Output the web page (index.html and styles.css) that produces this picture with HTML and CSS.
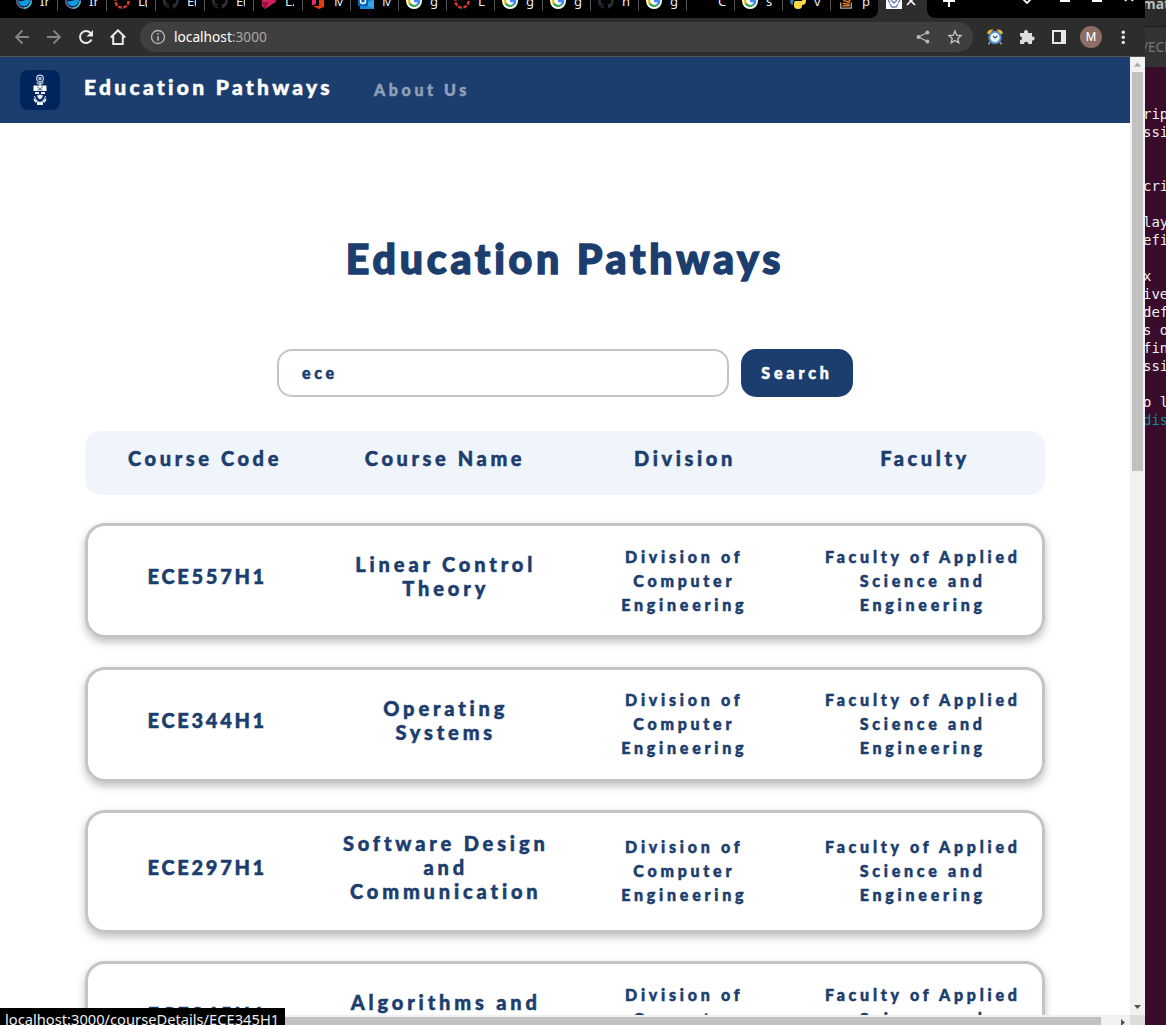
FILE: index.html
```html
<!DOCTYPE html>
<html lang="en">
<head>
<meta charset="utf-8">
<title>Education Pathways</title>
<link rel="stylesheet" href="styles.css">
</head>
<body>
<svg class="defs" width="0" height="0">
  <symbol id="swirl" viewBox="0 0 16 16"><circle cx="8" cy="8" r="7.2" fill="#111b2c" stroke="#7a6bb0" stroke-width="1.4"/><path d="M8 15.2A7.2 7.2 0 0 0 15.2 8" fill="none" stroke="#3cc8d8" stroke-width="1.4"/><path d="M2 7.500Q5 9 8 7.500Q11 6 14 7Q13 13 8 13.200Q3 13 2 7.500Z" fill="#0d9be0"/></symbol>
  <symbol id="ring" viewBox="0 0 16 16"><circle cx="8" cy="8" r="6.600" fill="none" stroke="#e03a2f" stroke-width="2.400" stroke-dasharray="3.700 1.480"/></symbol>
  <symbol id="cat" viewBox="0 0 16 16"><path d="M8 0a8 8 0 0 0-2.500 15.600c.4.100.5-.2.500-.4v-1.500c-2.200.5-2.700-1-2.700-1-.4-.9-.9-1.200-.9-1.200-.7-.5.100-.5.100-.5.800.100 1.200.800 1.200.800.700 1.300 1.900.9 2.300.7.100-.5.300-.9.500-1.100C4.700 11.200 2.900 10.500 2.900 7.500c0-.9.300-1.600.8-2.100C3.600 5.100 3.300 4.300 3.800 3.200c0 0 .7-.2 2.200.8a7.600 7.600 0 0 1 4 0c1.500-1 2.200-.8 2.200-.8.400 1.100.2 1.900.1 2.100.5.600.8 1.300.8 2.200 0 3-1.900 3.700-3.600 3.900.3.300.5.700.5 1.500v2.200c0 .2.100.5.500.4A8 8 0 0 0 8 0z" fill="#2a2f36"/></symbol>
  <symbol id="google" viewBox="0 0 16 16"><circle cx="8" cy="8" r="8" fill="#fff"/><g fill="none" stroke-width="2.400"><path d="M3.800 5.500A5 5 0 0 1 11.500 4.500" stroke="#ea4335"/><path d="M3.700 5.600A5 5 0 0 0 3.700 10.500" stroke="#fbbc05"/><path d="M3.700 10.400A5 5 0 0 0 11.200 11.900" stroke="#34a853"/><path d="M11.100 11.900Q13.100 10.400 13 8H8" stroke="#4285f4"/></g></symbol>
  <symbol id="ribbon" viewBox="0 0 16 16"><path d="M1 2L16 8 4 16 1 13Z" fill="#d51e5b"/><path d="M1 9L8 9 4 16Z" fill="#8d1244"/></symbol>
  <symbol id="office" viewBox="0 0 16 16"><path d="M2 4L9 0 14 2V14L9 16 3 13H9V3L6 5V11L2 12Z" fill="#e73c12"/><path d="M2 5L6 4V11L2 12Z" fill="#e42a7e"/></symbol>
  <symbol id="mail" viewBox="0 0 16 16"><path d="M5 2H16V16H2V12Z" fill="#1487d7"/><path d="M5 11L16 7V16Z" fill="#35a5ea"/><rect y="4" width="10" height="9" fill="#0563b7"/><circle cx="5" cy="8" r="2.500" fill="none" stroke="#fff" stroke-width="1.500"/></symbol>
  <symbol id="python" viewBox="0 0 16 16"><path d="M4 3Q4 0 8 0T12 3V7H5Q3 7 3 12Q0 12 0 8T4 4Z" fill="#3b76a8"/><path d="M12 13Q12 16 8 16T4 13V10Q4 8 6 8H11Q13 8 13 4Q16 4 16 8T12 12Z" fill="#ffd648"/></symbol>
  <symbol id="stack" viewBox="0 0 16 16"><path d="M2.700 9.500V15.200H13.300V9.500" fill="none" stroke="#aaa" stroke-width="1.300"/><path d="M4.500 12.800H11.600M4.600 10.200L11.700 11.400M5.200 7.300L12 9.500M6.500 4.500L12.500 8" stroke="#ef7b25" stroke-width="1.400"/></symbol>
  <symbol id="crest" viewBox="0 0 16 32"><g fill="none" stroke="#c3cee2" stroke-width="1.200"><circle cx="8" cy="4.500" r="3.400"/><circle cx="8" cy="4.500" r="1.200"/><path d="M8 8V12M4.500 8.500L8 10.500 11.500 8.500"/><path d="M2.500 22Q3.500 27 8 28.500Q12.500 27 13.500 22"/></g><path d="M1.500 11.500H14.500V17H1.500Z" fill="#fff"/><path d="M5 12.500L8 15 11 12.500M5.500 15.800H10.500" fill="none" stroke="#51699a" stroke-width="1"/><path d="M3 18H7V20H3ZM9 18H13V20H9ZM5 21.500L8 20.500 11 21.500 10 24 8 25.500 6 24ZM1.500 24L5 27 4 29 2 27ZM14.500 24L11 27 12 29 14 27ZM5 28H11V31H5Z" fill="#e8eef8"/></symbol>
</svg>
<div class="desktop">
  <div class="browser">
    <div class="tabs">
      <div class="tab wide"><svg><use href="#swirl"/></svg><span>Ir</span></div>
      <div class="tab wide"><svg><use href="#swirl"/></svg><span>Ir</span></div>
      <div class="tab wide"><svg><use href="#ring"/></svg><span>L(</span></div>
      <div class="tab wide"><svg><use href="#cat"/></svg><span>E(</span></div>
      <div class="tab wide"><svg><use href="#cat"/></svg><span>E(</span></div>
      <div class="tab wide"><svg><use href="#ribbon"/></svg><span>L.</span></div>
      <div class="tab"><svg><use href="#office"/></svg><span>M</span></div>
      <div class="tab"><svg><use href="#mail"/></svg><span>M</span></div>
      <div class="tab"><svg><use href="#google"/></svg><span>g</span></div>
      <div class="tab"><svg><use href="#ring"/></svg><span>L</span></div>
      <div class="tab"><svg><use href="#google"/></svg><span>g</span></div>
      <div class="tab"><svg><use href="#google"/></svg><span>g</span></div>
      <div class="tab"><svg><use href="#cat"/></svg><span>n</span></div>
      <div class="tab"><svg><use href="#google"/></svg><span>g</span></div>
      <div class="tab"><svg></svg><span>C</span></div>
      <div class="tab"><svg><use href="#google"/></svg><span>s</span></div>
      <div class="tab"><svg><use href="#python"/></svg><span>v</span></div>
      <div class="tab last"><svg><use href="#stack"/></svg><span>p</span></div>
      <div class="tab-active"><svg width="49" height="18"><rect x="8" width="16" height="9" fill="#fff"/><path d="M10 0L12 3M22 0L20 3M12 4L14 7H18L20 4M13 0L16 3 19 0" fill="none" stroke="#6b7bab" stroke-width="1.300"/><path d="M29 -3L37 5M37 -3L29 5" stroke="#fff" stroke-width="1.700"/></svg></div>
      <div class="strip-end"><svg width="218" height="18"><path d="M22 -5V7M16 1H28" stroke="#fff" stroke-width="2"/><path d="M96 -1L100 3 104 -1" fill="none" stroke="#fff" stroke-width="1.800"/><path d="M133 1H143M165 1H175" stroke="#fff" stroke-width="2"/><path d="M198 1L202 -3 206 1" fill="none" stroke="#fff" stroke-width="1.700"/></svg></div>
    </div>
    <div class="toolbar">
      <div class="tool"><svg viewBox="0 0 16 16"><path d="M15 8H2M8.500 1.500L2 8 8.500 14.500" fill="none" stroke="#858585" stroke-width="1.800"/></svg></div>
      <div class="tool"><svg viewBox="0 0 16 16"><path d="M1 8H14M7.500 1.500L14 8 7.500 14.500" fill="none" stroke="#858585" stroke-width="1.800"/></svg></div>
      <div class="tool"><svg viewBox="0 0 16 16"><path d="M13.500 10.500A6 6 0 1 1 12.500 4L14 5.500" fill="none" stroke="#e8e8e8" stroke-width="2"/><path d="M15 1V7.500H8.500Z" fill="#e8e8e8"/></svg></div>
      <div class="tool"><svg viewBox="0 0 16 16"><path d="M.8 8.500L8 1.300 15.200 8.500M3.200 7V15H12.800V7" fill="none" stroke="#e8e8e8" stroke-width="2"/></svg></div>
      <div class="omnibox">
        <svg width="16" height="16" viewBox="0 0 16 16"><circle cx="8" cy="8" r="6.500" fill="none" stroke="#bbb" stroke-width="1.300"/><path d="M8 7.200V11.800M8 4.200V5.800" stroke="#bbb" stroke-width="1.600"/></svg>
        <span class="url">localhost<span>:3000</span></span>
        <svg class="share" width="16" height="16" viewBox="0 0 16 16"><path d="M12.500 3.500L3.500 8 12.500 12.500" fill="none" stroke="#bbb" stroke-width="1.300"/><g fill="#bbb"><circle cx="12.400" cy="3.500" r="1.900"/><circle cx="3.500" cy="8" r="1.900"/><circle cx="12.400" cy="12.500" r="1.900"/></g></svg>
        <svg width="16" height="16" viewBox="0 0 16 16"><path d="M8 2L9.700 6.200 14 6.600 10.800 9.500 11.800 13.800 8 11.500 4.200 13.800 5.200 9.500 2 6.600 6.300 6.200Z" fill="none" stroke="#c6c6c6" stroke-width="1.300"/></svg>
      </div>
      <div class="tool"><svg viewBox="0 0 16 16"><path d="M3 13L1.500 15.500M13 13L14.500 15.500" stroke="#999" stroke-width="1.500"/><circle cx="8" cy="8.500" r="5.700" fill="#e9f5fd" stroke="#4f8fcb" stroke-width="2"/><path d="M.3 5Q0 0 6.500 .5L2.500 5ZM15.700 5Q16 0 9.500 .5L13.500 5Z" fill="#f4b92c"/><path d="M6 7L8 9 10.500 7" fill="none" stroke="#456" stroke-width="1.200"/></svg></div>
      <div class="tool"><svg viewBox="0 0 16 16"><path d="M1 4H5V3A2 2 0 0 1 9 3V4H13V7.500H13.700A2 2 0 0 1 13.700 11.500H13V15H9.300A2 2 0 0 0 5 15H1V11.300A2 2 0 0 0 1 7.300Z" fill="#ddd"/></svg></div>
      <div class="tool"><svg viewBox="0 0 16 16"><path d="M2 2H14V14H2Z" fill="none" stroke="#e8e8e8" stroke-width="2"/><path d="M10 2H14V14H10Z" fill="#e8e8e8"/></svg></div>
      <div class="tool"><span class="avatar">M</span></div>
      <div class="tool"><svg viewBox="0 0 16 16"><g fill="#e8e8e8"><circle cx="8.300" cy="3.200" r="1.700"/><circle cx="8.300" cy="8.300" r="1.700"/><circle cx="8.300" cy="13.400" r="1.700"/></g></svg></div>
    </div>
    <div class="viewport">
      <div class="page">
        <nav class="navbar">
          <div class="logo"><svg width="16" height="32"><use href="#crest"/></svg></div>
          <span class="brand">Education Pathways</span>
          <span class="about">About Us</span>
        </nav>
        <h1 class="title">Education Pathways</h1>
        <div class="search"><input class="query" type="text" value="ece"><button class="go">Search</button></div>
        <div class="head"><div>Course Code</div><div>Course Name</div><div>Division</div><div>Faculty</div></div>
        <div class="card"><div class="code">ECE557H1</div><div class="name">Linear Control<br>Theory</div><div class="unit">Division of<br>Computer<br>Engineering</div><div class="unit">Faculty of Applied<br>Science and<br>Engineering</div></div>
        <div class="card"><div class="code">ECE344H1</div><div class="name">Operating<br>Systems</div><div class="unit">Division of<br>Computer<br>Engineering</div><div class="unit">Faculty of Applied<br>Science and<br>Engineering</div></div>
        <div class="card tall"><div class="code">ECE297H1</div><div class="name">Software Design<br>and<br>Communication</div><div class="unit">Division of<br>Computer<br>Engineering</div><div class="unit">Faculty of Applied<br>Science and<br>Engineering</div></div>
        <div class="card"><div class="code">ECE345H1</div><div class="name">Algorithms and<br>Data Structures</div><div class="unit">Division of<br>Computer<br>Engineering</div><div class="unit">Faculty of Applied<br>Science and<br>Engineering</div></div>
      </div>
      <div class="vbar"><svg width="15" height="15"><path d="M4 9.500H11L7.500 5.500Z" fill="#a3a3a3"/></svg><div class="vthumb"></div><svg width="15" height="15"><path d="M4 5H11L7.500 9Z" fill="#505050"/></svg></div>
      <div class="hbar"><div class="hthumb"></div><svg width="15" height="10"><path d="M6 4V11L10 7.500Z" fill="#505050"/></svg></div>
      <div class="corner"></div>
    </div>
    <div class="status">localhost:3000/courseDetails/ECE345H1</div>
  </div>
  <div class="terminal">
    <div class="term-title">mat</div>
    <div class="term-tab">/ECE</div>
    <pre class="term-text">rip
ssi


cri

lay
efi

x
ive
def
s o
fin
ssi

o l
<i>dis</i></pre>
  </div>
</div>
</body>
</html>
```
FILE: styles.css
```css
* { box-sizing: border-box; }
body { margin: 0; width: 1166px; height: 1025px; overflow: hidden; background: #fff; }
svg { display: block; flex: none; }
.defs { position: absolute; }
.desktop { display: grid; grid-template-columns: 1145px 21px; height: 1025px; }
.browser { position: relative; display: flex; flex-direction: column; height: 1025px; overflow: hidden; font-family: "Noto Sans", sans-serif; }

.tabs { display: flex; height: 18px; background: #2d2d2d; overflow: hidden; }
.tab { display: flex; width: 48px; height: 18px; padding-left: 8px; background: linear-gradient(#555, #555) left top / 1px 11px no-repeat #000; color: #eee; font-size: 13px; line-height: 18px; }
.tab.wide { width: 49px; }
.tab.wide:first-child { width: 57px; padding-left: 16px; background: #000; }
.tab.last { border-bottom-right-radius: 8px; }
.tab svg { width: 16px; height: 16px; margin-top: -7px; margin-right: 8px; }
.tab span { width: 9px; height: 18px; margin-top: -8px; overflow: hidden; white-space: nowrap; }
.tab-active { width: 49px; }
.strip-end { width: 218px; background: #000; border-bottom-left-radius: 8px; }

.toolbar { display: flex; align-items: center; height: 39px; padding-left: 6px; background: #2d2d2d; border-bottom: 1px solid #555; }
.tool { display: flex; width: 32px; align-items: center; justify-content: center; }
.tool svg { width: 16px; height: 16px; }
.omnibox { display: flex; align-items: center; width: 833px; height: 30px; margin: 0 6px; padding: 0 10px; border-radius: 15px; background: #3f3f3f; }
.url { margin-left: 8px; color: #fff; font-size: 13.7px; line-height: 20px; }
.url span { color: #aaa; }
.share { margin-left: auto; margin-right: 16px; }
.avatar { width: 22px; height: 22px; border-radius: 50%; background: #8d6e63; color: #fff; font: 12px/22px Roboto, sans-serif; text-align: center; }

.viewport { display: grid; grid-template-columns: 1130px 15px; grid-template-rows: 958px 10px; }
.page { overflow: hidden; background: #fff; color: #1c3e6e; font-family: Lato, sans-serif; font-weight: 900; -webkit-text-stroke: .5px currentColor; }
.navbar { display: flex; align-items: center; height: 66px; padding-left: 20px; background: #1c3e6e; }
.logo { display: flex; align-items: center; justify-content: center; width: 40px; height: 40px; margin-right: 24px; border-radius: 8px; background: #00255c; }
.brand { width: 290px; margin-top: -6px; color: #fff; font-size: 21px; letter-spacing: 3.300px; line-height: 24px; white-space: nowrap; }
.about { margin-top: -2px; color: #8f9fb8; font-size: 16px; letter-spacing: 3.600px; }
.title { margin: 111px 0 0; font-size: 41px; font-weight: 900; letter-spacing: 3.800px; line-height: 50px; text-align: center; -webkit-text-stroke-width: 1.500px; }
.search { display: flex; gap: 12px; margin: 65px 0 34px 277px; }
.query { width: 452px; height: 48px; padding: 0 23px 2px; border: 2px solid #c4c4c4; border-radius: 15px; outline: 0; color: inherit; font: inherit; font-size: 16px; letter-spacing: 3.700px; }
.go { width: 112px; height: 48px; padding: 0 0 2px; border: 0; border-radius: 15px; background: #1c3e6e; color: #fff; font: inherit; font-size: 16px; letter-spacing: 3.900px; }
.head { display: grid; grid-template-columns: repeat(4, 240px); width: 960px; height: 64px; margin-left: 85px; padding-top: 15px; border-radius: 15px; background: #f0f5fc; font-size: 20px; letter-spacing: 3.600px; line-height: 24px; text-align: center; }
.card { display: grid; grid-template-columns: repeat(4, 1fr); align-items: center; width: 960px; height: 115.200px; margin: 28.200px 0 0 85px; border: 3px solid #c4c4c4; border-radius: 20px; box-shadow: 0 4px 8px rgba(0,0,0,.25); text-align: center; line-height: 24px; white-space: nowrap; }
.card.tall { height: 123px; }
.code, .name { padding-bottom: 9px; font-size: 20px; letter-spacing: 3.850px; }
.code { letter-spacing: 2.700px; }
.unit { font-size: 16px; letter-spacing: 3.750px; }

.vbar { display: flex; flex-direction: column; align-items: center; background: #f1f1f1; }
.vthumb { width: 11px; height: 399px; margin-bottom: auto; background: #c1c1c1; }
.hbar { display: flex; justify-content: space-between; background: #f1f1f1; }
.hthumb { width: 1101px; margin-top: 2px; background: #c1c1c1; }
.corner { background: #dcdcdc; }
.status { position: absolute; left: 0; top: 1008px; width: 285px; height: 17px; padding-left: 5px; background: #000; color: #eee; font-size: 14.700px; line-height: 22px; white-space: nowrap; overflow: hidden; }

.terminal { overflow: hidden; background: #380c2a; color: #bbb; font-family: "Noto Sans", sans-serif; }
.term-title { height: 27px; background: #2b2b2b; border-bottom: 1px solid #1c1c1c; font-size: 14px; font-weight: 700; line-height: 8px; text-indent: -3px; }
.term-tab { height: 40px; background: #333; color: #777; font-size: 13.5px; line-height: 40px; text-indent: -2px; }
.term-text { margin: 38px 0 0 -2px; color: #eee; font: 14px/18px "DejaVu Sans Mono", monospace; }
.term-text i { color: #128b8b; font-style: normal; }
```
